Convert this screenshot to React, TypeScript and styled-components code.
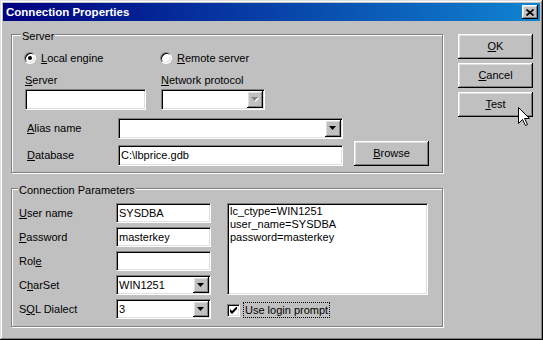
import styled, { createGlobalStyle } from 'styled-components';

const GlobalStyle = createGlobalStyle`
  html, body {
    margin: 0;
    padding: 0;
    background: #c0c0c0;
  }
  body {
    font-family: "Liberation Sans", Arial, sans-serif;
    font-size: 11px;
    color: #000;
  }
`;

const raised = `
  box-shadow: inset -1px -1px #000, inset 1px 1px #fff,
    inset -2px -2px #808080, inset 2px 2px #dfdfdf;
`;

const sunken = `
  border: 1px solid;
  border-color: #808080 #fff #fff #808080;
  box-shadow: inset 1px 1px #000, inset -1px -1px #dfdfdf;
`;

const Window = styled.div`
  width: 543px;
  height: 340px;
  box-sizing: border-box;
  padding: 3px;
  background: #c0c0c0;
  box-shadow: inset -1px -1px #000, inset 1px 1px #dfdfdf,
    inset -2px -2px #808080, inset 2px 2px #fff;
  display: flex;
  flex-direction: column;
`;

const TitleBar = styled.div`
  height: 18px;
  flex-shrink: 0;
  display: flex;
  align-items: center;
  justify-content: space-between;
  padding: 0 2px 0 3px;
  background: linear-gradient(to right, #000080, #1084d0);
`;

const TitleText = styled.span`
  color: #fff;
  font-weight: bold;
  font-size: 11.5px;
  line-height: 18px;
`;

const CloseButton = styled.div`
  width: 16px;
  height: 14px;
  background: #c0c0c0;
  display: flex;
  align-items: center;
  justify-content: center;
  ${raised}
`;

const Body = styled.div`
  display: flex;
  gap: 15px;
  padding: 13px 0 0 8px;
`;

const LeftColumn = styled.div`
  display: flex;
  flex-direction: column;
  gap: 15px;
  width: 432px;
`;

const Group = styled.div`
  position: relative;
  box-sizing: border-box;
  height: 139px;
  border: 1px solid #808080;
  box-shadow: inset 1px 1px #fff, 1px 1px #fff;
`;

const Caption = styled.span<{ $indent: number }>`
  position: absolute;
  top: -5px;
  left: ${p => p.$indent}px;
  padding: 0 1px;
  line-height: 13px;
  background: #c0c0c0;
`;

const Hot = styled.span`
  text-decoration: underline;
  text-underline-offset: 1px;
`;

const ServerBody = styled.div`
  padding: 17px 0 0 12px;
`;

const RadioRow = styled.div`
  display: grid;
  grid-template-columns: 136px auto;
  height: 12px;
`;

const RadioItem = styled.label`
  display: flex;
  align-items: center;
  gap: 5px;
  line-height: 12px;
`;

const RadioCircle = styled.span<{ $checked?: boolean }>`
  box-sizing: border-box;
  width: 12px;
  height: 12px;
  border-radius: 50%;
  background: #fff;
  display: flex;
  align-items: center;
  justify-content: center;
  ${sunken}
  &::after {
    content: '';
    width: 4px;
    height: 4px;
    border-radius: 50%;
    background: #000;
    display: ${p => (p.$checked ? 'block' : 'none')};
  }
`;

const PairRow = styled.div`
  display: grid;
  grid-template-columns: 136px auto;
  margin-top: 10px;
  padding-left: 1px;
`;

const FieldStack = styled.div`
  display: flex;
  flex-direction: column;
  gap: 2px;
`;

const Label = styled.span<{ $w?: number }>`
  line-height: 13px;
  white-space: nowrap;
  ${p => (p.$w ? `width: ${p.$w}px; flex-shrink: 0;` : '')}
`;

const LabeledRow = styled.div<{ $top: number }>`
  display: flex;
  align-items: center;
  height: 21px;
  margin-top: ${p => p.$top}px;
  padding-left: 3px;
`;

const Field = styled.div<{ $w: number; $h?: number; $multi?: boolean }>`
  box-sizing: border-box;
  width: ${p => p.$w}px;
  height: ${p => p.$h ?? 21}px;
  flex-shrink: 0;
  background: #fff;
  padding: 1px;
  display: flex;
  align-items: ${p => (p.$multi ? 'flex-start' : 'center')};
  ${sunken}
`;

const FieldText = styled.span`
  flex: 1;
  padding-left: 1px;
  line-height: 13px;
  white-space: pre;
  overflow: hidden;
`;

const MemoText = styled.div`
  padding-left: 1px;
  line-height: 13px;
  white-space: pre;
`;

const DropButton = styled.div`
  width: 16px;
  align-self: stretch;
  background: #c0c0c0;
  display: flex;
  align-items: center;
  justify-content: center;
  ${raised}
`;

const PushButton = styled.div`
  position: relative;
  box-sizing: border-box;
  width: 75px;
  height: 25px;
  flex-shrink: 0;
  background: #c0c0c0;
  display: flex;
  align-items: center;
  justify-content: center;
  line-height: 13px;
  ${raised}
`;

const BrowseButton = styled(PushButton)`
  align-self: flex-end;
  margin-left: 11px;
`;

const ParamGrid = styled.div`
  display: grid;
  grid-template-columns: 81px 95px 201px;
  grid-auto-rows: 20px;
  column-gap: 16px;
  row-gap: 4px;
  padding: 14px 0 0 7px;
`;

const GridLabel = styled.span`
  align-self: center;
  line-height: 13px;
  white-space: nowrap;
`;

const MemoCell = styled.div`
  grid-column: 3;
  grid-row: 1 / span 4;
`;

const CheckRow = styled.div`
  grid-column: 3;
  grid-row: 5;
  align-self: end;
  margin-bottom: 1px;
  display: flex;
  align-items: center;
  gap: 3px;
`;

const CheckBox = styled.span`
  box-sizing: border-box;
  width: 13px;
  height: 13px;
  background: #fff;
  display: flex;
  align-items: center;
  justify-content: center;
  ${sunken}
`;

const FocusLabel = styled.span`
  border: 1px dotted #000;
  padding: 0 1px;
  line-height: 14px;
`;

const ButtonColumn = styled.div`
  display: flex;
  flex-direction: column;
  gap: 4px;
`;

const Pointer = styled.svg`
  position: absolute;
  left: 60px;
  top: 15px;
`;

const Arrow = ({ disabled }: { disabled?: boolean }) => (
  <svg width="8" height="5" viewBox="0 0 8 5">
    {disabled && <polygon points="1,1 8,1 4.5,5" fill="#fff" />}
    <polygon points="0,0 7,0 3.5,4" fill={disabled ? '#808080' : '#000'} />
  </svg>
);

const Combo = ({ w, h, text, disabled }: { w: number; h?: number; text?: string; disabled?: boolean }) => (
  <Field $w={w} $h={h}>
    <FieldText>{text}</FieldText>
    <DropButton>
      <Arrow disabled={disabled} />
    </DropButton>
  </Field>
);

const Edit = ({ w, h, text }: { w: number; h?: number; text?: string }) => (
  <Field $w={w} $h={h}>
    <FieldText>{text}</FieldText>
  </Field>
);

const App = () => {
  return (
    <>
      <GlobalStyle />
      <Window>
        <TitleBar>
          <TitleText>Connection Properties</TitleText>
          <CloseButton>
            <svg width="8" height="7" viewBox="0 0 8 7">
              <path d="M0.5 0.5 L7.5 6.5 M7.5 0.5 L0.5 6.5" stroke="#000" strokeWidth="1.7" />
            </svg>
          </CloseButton>
        </TitleBar>
        <Body>
          <LeftColumn>
            <Group>
              <Caption $indent={9}>Server</Caption>
              <ServerBody>
                <RadioRow>
                  <RadioItem>
                    <RadioCircle $checked />
                    <span><Hot>L</Hot>ocal engine</span>
                  </RadioItem>
                  <RadioItem>
                    <RadioCircle />
                    <span><Hot>R</Hot>emote server</span>
                  </RadioItem>
                </RadioRow>
                <PairRow>
                  <FieldStack>
                    <Label><Hot>S</Hot>erver</Label>
                    <Edit w={121} />
                  </FieldStack>
                  <FieldStack>
                    <Label><Hot>N</Hot>etwork protocol</Label>
                    <Combo w={104} disabled />
                  </FieldStack>
                </PairRow>
                <LabeledRow $top={8}>
                  <Label $w={91}><Hot>A</Hot>lias name</Label>
                  <Combo w={225} />
                </LabeledRow>
                <LabeledRow $top={6}>
                  <Label $w={91}><Hot>D</Hot>atabase</Label>
                  <Edit w={225} text="C:\lbprice.gdb" />
                  <BrowseButton><span><Hot>B</Hot>rowse</span></BrowseButton>
                </LabeledRow>
              </ServerBody>
            </Group>
            <Group>
              <Caption $indent={6}>Connection Parameters</Caption>
              <ParamGrid>
                <GridLabel><Hot>U</Hot>ser name</GridLabel>
                <Edit w={95} h={20} text="SYSDBA" />
                <MemoCell>
                  <Field $w={201} $h={92} $multi>
                    <MemoText>{'lc_ctype=WIN1251\nuser_name=SYSDBA\npassword=masterkey'}</MemoText>
                  </Field>
                </MemoCell>
                <GridLabel><Hot>P</Hot>assword</GridLabel>
                <Edit w={95} h={20} text="masterkey" />
                <GridLabel>Rol<Hot>e</Hot></GridLabel>
                <Edit w={95} h={20} />
                <GridLabel>C<Hot>h</Hot>arSet</GridLabel>
                <Combo w={95} h={20} text="WIN1251" />
                <GridLabel>S<Hot>Q</Hot>L Dialect</GridLabel>
                <Combo w={95} h={20} text="3" />
                <CheckRow>
                  <CheckBox>
                    <svg width="7" height="7" viewBox="0 0 7 7">
                      <polygon points="0,2 2,4 7,-1 7,2 2,7 0,5" fill="#000" />
                    </svg>
                  </CheckBox>
                  <FocusLabel>Use login prompt</FocusLabel>
                </CheckRow>
              </ParamGrid>
            </Group>
          </LeftColumn>
          <ButtonColumn>
            <PushButton><span><Hot>O</Hot>K</span></PushButton>
            <PushButton><span><Hot>C</Hot>ancel</span></PushButton>
            <PushButton>
              <span><Hot>T</Hot>est</span>
              <Pointer width="12" height="19" viewBox="0 0 12 19">
                <polygon
                  points="0.5,0.5 0.5,16.5 4.5,12.5 7.5,18.5 9.5,17.5 6.5,11.5 11.5,11.5"
                  fill="#fff"
                  stroke="#000"
                  strokeWidth="1"
                />
              </Pointer>
            </PushButton>
          </ButtonColumn>
        </Body>
      </Window>
    </>
  );
};

export default App;
